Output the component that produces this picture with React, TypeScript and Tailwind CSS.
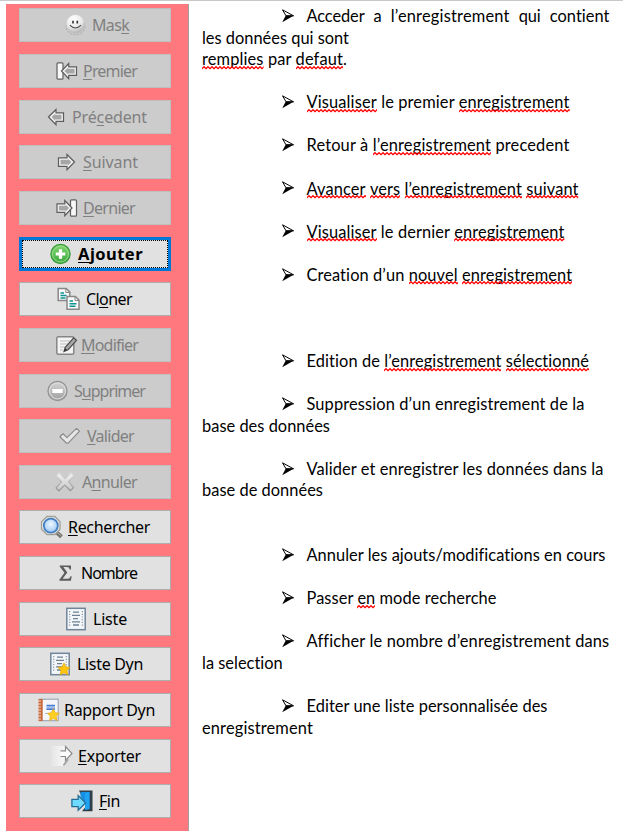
import { useLayoutEffect, useRef, useState, type ReactNode } from "react";

/* Spreads or tightens the letters of a run so that it fills the given width. */
function Fit({ w, className = "", children }: { w: number; className?: string; children: ReactNode }) {
  const ref = useRef<HTMLSpanElement>(null);
  const [spacing, setSpacing] = useState(0);
  useLayoutEffect(() => {
    const el = ref.current;
    if (!el) return;
    el.style.letterSpacing = "0px";
    const natural = el.getBoundingClientRect().width;
    const next = (w - natural) / (el.textContent || " ").length;
    el.style.letterSpacing = `${next}px`;
    setSpacing(next);
  }, [w]);
  return (
    <span ref={ref} className={`inline-block whitespace-pre ${className}`} style={{ letterSpacing: `${spacing}px` }}>
      {children}
    </span>
  );
}

const PrevArrow = () => (
  <g>
    <path d="M1.5 12 9 4.5v3.3h7.5v8.6H9v3.3z" fill="#f4f4f4" stroke="#5c5c5c" strokeWidth="1.2" />
    <path d="M4.5 12 8 8.8v1h6.5v4.7H8v1z" fill="#a6a6a6" />
  </g>
);
const NextArrow = () => (
  <g>
    <path d="M17.5 12 10 4.5v3.3H1.5v8.6H10v3.3z" fill="#f4f4f4" stroke="#5c5c5c" strokeWidth="1.2" />
    <path d="M14.5 12 11 8.8v1H3.5v4.7H11v1z" fill="#a6a6a6" />
  </g>
);
const Sheet = () => (
  <g>
    <rect x="0.8" y="1.3" width="18.4" height="21.4" fill="#f3f6f8" stroke="#71859a" strokeWidth="1.5" />
    <path d="M3.7 4v16M16.3 4v16" stroke="#8b9bab" strokeWidth="1.2" strokeDasharray="1.2 1.5" />
    <path d="M7 5.2h6M6 8.4h8M7 11.6h5M6 14.8h8M7 18h6" stroke="#6f8192" strokeWidth="1.3" />
  </g>
);
const STAR = "M0-6 1.9-2.1 6-1.6 3 1.5 3.8 5.8 0 3.8-3.8 5.8-3 1.5-6-1.6-1.9-2.1z";

const icons: Record<string, ReactNode> = {
  mask: (
    <g>
      <ellipse cx="10.5" cy="13.5" rx="9.5" ry="8.5" fill="#c3c3c3" stroke="#a9a9a9" strokeWidth=".8" strokeDasharray="2 1.5" />
      <circle cx="10.4" cy="10.8" r="9" fill="url(#ball)" />
      <path d="M8 7.7v2.8M12.3 7.7v2.8" stroke="#303030" strokeWidth="1.6" />
      <path d="M4.8 12.2q5.6 5.6 11.2 0" fill="none" stroke="#4c4c4c" strokeWidth="1.2" />
    </g>
  ),
  first: (
    <g>
      <rect x="1" y="3.8" width="6" height="16.4" rx="1" fill="#f8f8f8" stroke="#606060" strokeWidth="1.2" />
      <path d="M5.5 12 12.7 4.5v3.3h7.8v8.6h-7.8v3.3z" fill="#f4f4f4" stroke="#5c5c5c" strokeWidth="1.2" />
      <path d="M8.3 12 12 8.8v1h6.6v4.7H12v1z" fill="#a6a6a6" />
    </g>
  ),
  prev: <PrevArrow />,
  next: <NextArrow />,
  last: (
    <g>
      <rect x="14.5" y="3.8" width="6" height="16.4" rx="1" fill="#f8f8f8" stroke="#606060" strokeWidth="1.2" />
      <path d="M16 12 8.8 4.5v3.3H1v8.6h7.8v3.3z" fill="#f4f4f4" stroke="#5c5c5c" strokeWidth="1.2" />
      <path d="M13.2 12 9.5 8.8v1H2.9v4.7h6.6v1z" fill="#a6a6a6" />
    </g>
  ),
  add: (
    <g>
      <circle cx="10.5" cy="12" r="9.6" fill="url(#green)" stroke="#359b37" strokeWidth="1.2" />
      <circle cx="10.5" cy="12" r="8" fill="none" stroke="#a1dc93" strokeWidth=".9" />
      <path d="M10.5 7.2v9.6M5.7 12h9.6" stroke="#fff" strokeWidth="3.2" />
    </g>
  ),
  clone: (
    <g>
      <path d="M1.2 1.5h8l3.6 3.6v8.4H1.2z" fill="#fafafa" stroke="#888" strokeWidth="1.5" />
      <path d="M8.8 1.5v4h4" fill="none" stroke="#888" />
      <path d="M3.5 6h3.5M3.5 8.5h6M3.5 11h5" stroke="#0e9292" strokeWidth="1.5" />
      <path d="M10 9.5h8.4l3.6 3.6v9.2H10z" fill="#fafafa" stroke="#888" strokeWidth="1.5" />
      <path d="M18 9.5v4h4" fill="none" stroke="#888" />
      <path d="M12.5 14h3.5M12.5 16.7h7M12.5 19.3h6" stroke="#0e9292" strokeWidth="1.5" />
    </g>
  ),
  edit: (
    <g>
      <rect x=".8" y="3.8" width="17" height="17.4" rx="1.5" fill="#f4f4f4" stroke="#858585" strokeWidth="1.5" />
      <path d="M4 8h10M4 11h8M4 14h5M4 17h3" stroke="#bdbdbd" strokeWidth="1.1" />
      <path d="m8 18.5 1.3-4.2 8.4-9.5 2.8 2.5-8.4 9.4z" fill="#a8a8a8" stroke="#4c4c4c" strokeWidth="1.2" />
      <path d="m8 18.5 1-3.2 2.4 1.8z" fill="#333" />
    </g>
  ),
  remove: (
    <g>
      <circle cx="10.5" cy="12" r="9.6" fill="url(#gray)" stroke="#929292" strokeWidth="1.1" />
      <circle cx="10.5" cy="12" r="7.9" fill="none" stroke="#dedede" strokeWidth="1" />
      <path d="M5.3 12h10.4" stroke="#fff" strokeWidth="4" />
    </g>
  ),
  check: <path d="M.9 12.8 4 9.8l4 3.8L17.5 4.4l3 2.8L9.2 19.2H7.6z" fill="#e7e7e7" stroke="#8c8c8c" strokeWidth="1.2" strokeLinejoin="round" />,
  cancel: (
    <path d="M1 5.5 4.3 2.8 10 8.5 16 3l3 2.8-5.5 5.8 5 6-3.2 3L9.8 15l-6 5.8-2.8-3 5.6-6z" fill="url(#fade)" stroke="url(#fadeStroke)" strokeWidth="1.1" strokeLinejoin="round" />
  ),
  search: (
    <g>
      <path d="m15.5 16.5 6 5.2" stroke="#74746c" strokeWidth="4" />
      <path d="m16.5 16.8 4.3 3.8" stroke="#b9b9ae" strokeWidth="1" />
      <path d="M7 1.5h8L20 6.7v7.6l-5 5.2H7L1.5 14.3V6.7z" fill="#e9e9e4" stroke="#a1a19a" strokeWidth="1.3" />
      <circle cx="10.8" cy="10.6" r="7" fill="url(#lens)" stroke="#4681c5" strokeWidth="1.8" />
    </g>
  ),
  sum: (
    <path d="M.7 4.4H12v4h-1.4c-.2-1.6-1-2.3-2.8-2.3H4.3l4 5.3-4.7 6.3h5c1.6 0 2.4-.8 2.9-2.5h1.2l-.8 4.5H.4v-1l5-6.9L.7 5.4z" fill="#5c5c5c" />
  ),
  list: <Sheet />,
  listDyn: (
    <g>
      <Sheet />
      <g transform="translate(14 17)"><path d={STAR} fill="#ffc40e" stroke="#e5a700" strokeWidth=".7" /></g>
    </g>
  ),
  report: (
    <g>
      <rect x="1.7" y="1.2" width="18.5" height="21.5" fill="#f4f6fa" stroke="#9aa3b4" strokeWidth="1.1" />
      <rect x=".5" y="1" width="4.2" height="22" fill="#c8673a" />
      <path d="M0 3h3M0 6h3M0 9h3M0 12h3M0 15h3M0 18h3M0 21h3" stroke="#f1dacb" strokeWidth="1" />
      <path d="M8.5 7.7h8.5M8.5 11.2h8.5" stroke="#467bd2" strokeWidth="1.7" />
      <path d="M8.5 9.4h8.5" stroke="#9ebaeb" strokeWidth="1.6" />
      <path d="M7 15.5h4" stroke="#a6b7d3" />
      <g transform="translate(15.3 16.8)"><path d={STAR} fill="#ffcf22" stroke="#e5a91c" strokeWidth=".7" /></g>
    </g>
  ),
  export: (
    <g>
      <path d="M.5 2h14v20H.5z" fill="url(#paper)" />
      <path d="M9.5 6.8h5V2.5l6.5 7-6.5 7v-4h-5" fill="#fbfbfb" stroke="#8b8b8b" strokeWidth="1.2" />
      <path d="m12.5 21.5 4.5-6.3" fill="none" stroke="#a5a5a5" strokeWidth="2" />
    </g>
  ),
  exit: (
    <g>
      <path d="M8 1.5h13.5v20.7H11l4-5z" fill="#2f3e49" />
      <path d="M9.5 3h9v17h-5l2-6-6-6z" fill="#168fe2" />
      <path d="m14 4 4.5-1v17l-4.5 1z" fill="#1fa2f2" />
      <path d="M.9 10.3h6.3V6.6l7.3 7.3-7.3 7.3v-3.6H.9z" fill="#6fdcff" stroke="#226d98" strokeWidth="1.3" />
    </g>
  ),
};

type Item = {
  icon: string;
  pad: string;
  gap: string;
  w: number;
  parts: [string, string, string];
  off?: boolean;
  focus?: boolean;
};

/* pad: button edge to icon; gap: icon box (24px) to label. */
const items: Item[] = [
  { icon: "mask", pad: "pl-[46px]", gap: "ml-[3px]", w: 37, parts: ["Mas", "k", ""], off: true },
  { icon: "first", pad: "pl-[37px]", gap: "ml-[3px]", w: 54, parts: ["", "P", "remier"], off: true },
  { icon: "prev", pad: "pl-[28px]", gap: "ml-[1px]", w: 75, parts: ["Pré", "c", "edent"], off: true },
  { icon: "next", pad: "pl-[38px]", gap: "ml-[2px]", w: 55, parts: ["", "S", "uivant"], off: true },
  { icon: "last", pad: "pl-[37px]", gap: "ml-[3px]", w: 52, parts: ["", "D", "ernier"], off: true },
  { icon: "add", pad: "pl-[31px]", gap: "ml-[4px]", w: 65, parts: ["", "A", "jouter"], focus: true },
  { icon: "clone", pad: "pl-[38px]", gap: "ml-[5px]", w: 46, parts: ["Cl", "o", "ner"] },
  { icon: "edit", pad: "pl-[37px]", gap: "ml-[1px]", w: 57, parts: ["", "M", "odifier"], off: true },
  { icon: "remove", pad: "pl-[28px]", gap: "ml-[3px]", w: 71, parts: ["S", "u", "pprimer"], off: true },
  { icon: "check", pad: "pl-[40px]", gap: "ml-[4px]", w: 47, parts: ["", "V", "alider"], off: true },
  { icon: "cancel", pad: "pl-[36px]", gap: "ml-[3px]", w: 55, parts: ["A", "n", "nuler"], off: true },
  { icon: "search", pad: "pl-[21px]", gap: "ml-[4px]", w: 82, parts: ["", "R", "echercher"] },
  { icon: "sum", pad: "pl-[40px]", gap: "-ml-[2px]", w: 56, parts: ["Nombre", "", ""] },
  { icon: "list", pad: "pl-[47px]", gap: "ml-[3px]", w: 34, parts: ["Liste", "", ""] },
  { icon: "listDyn", pad: "pl-[31px]", gap: "ml-[3px]", w: 66, parts: ["Liste Dyn", "", ""] },
  { icon: "report", pad: "pl-[19px]", gap: "ml-[2px]", w: 91, parts: ["Rapport Dyn", "", ""] },
  { icon: "export", pad: "pl-[32px]", gap: "ml-[3px]", w: 63, parts: ["", "E", "xporter"] },
  { icon: "exit", pad: "pl-[52px]", gap: "ml-[4px]", w: 21, parts: ["", "F", "in"] },
];

function ToolButton({ item }: { item: Item }) {
  const tone = item.focus
    ? "bg-[#e1e1e1] text-black font-bold outline-[3px] -outline-offset-[3px] outline-[#0078d7]"
    : item.off
      ? "bg-[#cccccc] text-[#808080] outline-1 -outline-offset-1 outline-[#bfbfbf]"
      : "bg-[#e1e1e1] text-black outline-[1.5px] -outline-offset-1 outline-[#adadad]";
  return (
    <button className={`relative flex h-[34px] w-[152px] shrink-0 items-center outline-solid ${tone} ${item.pad}`}>
      {item.focus && <span className="absolute inset-[3px] border border-dotted border-black" />}
      <svg width="24" height="24" viewBox="0 0 24 24" className="shrink-0">{icons[item.icon]}</svg>
      <Fit w={item.w} className={`${item.focus ? "text-[16.5px]" : "text-[16px]"} leading-[22px] ${item.gap}`}>
        {item.parts[0]}
        {item.parts[1] && <span className="underline decoration-1 underline-offset-[2px] [text-decoration-skip-ink:none]">{item.parts[1]}</span>}
        {item.parts[2]}
      </Fit>
    </button>
  );
}

/* A word flagged by the spelling checker. */
function Err({ children }: { children: ReactNode }) {
  return (
    <span className="relative inline-block">
      {children}
      <svg className="absolute top-[17.5px] left-0 h-[4px] w-full">
        <rect width="100%" height="4" fill="url(#wave)" />
      </svg>
    </span>
  );
}

const Bullet = () => (
  <svg width="12" height="14" viewBox="0 0 12 14" className="mr-[12.5px] ml-[80px] shrink-0">
    <path d="M.5.8 11.5 6.8 4 6.8z" fill="#fff" stroke="#000" strokeWidth="1" />
    <path d="M.2 13.2 3.8 6.5H12z" fill="#000" />
  </svg>
);

type Line = { w?: number; bullet?: boolean; body?: ReactNode };
const lines: Line[] = [
  {
    bullet: true,
    body: (
      <span className="flex w-[303px] justify-between">
        <Fit w={58}>Acceder</Fit><Fit w={8}>a</Fit><Fit w={119}>l’enregistrement</Fit><Fit w={22}>qui</Fit><Fit w={60}>contient</Fit>
      </span>
    ),
  },
  { w: 147, body: "les données qui sont" },
  { w: 145, body: <><Err>remplies</Err> par <Err>defaut</Err>.</> },
  {},
  { w: 263, bullet: true, body: <><Err>Visualiser</Err> le premier <Err>enregistrement</Err></> },
  {},
  { w: 263, bullet: true, body: <>Retour à <Err>l’enregistrement</Err> precedent</> },
  {},
  { w: 272, bullet: true, body: <><Err>Avancer</Err> <Err>vers</Err> <Err>l’enregistrement</Err> <Err>suivant</Err></> },
  {},
  { w: 258, bullet: true, body: <><Err>Visualiser</Err> le dernier <Err>enregistrement</Err></> },
  {},
  { w: 266, bullet: true, body: <>Creation d’un <Err>nouvel</Err> <Err>enregistrement</Err></> },
  {},
  {},
  {},
  { w: 283, bullet: true, body: <>Edition de <Err>l’enregistrement</Err> <Err>sélectionné</Err></> },
  {},
  { w: 278, bullet: true, body: "Suppression d’un enregistrement de la" },
  { w: 128, body: "base des données" },
  {},
  { w: 297, bullet: true, body: "Valider et enregistrer les données dans la" },
  { w: 121, body: "base de données" },
  {},
  {},
  { w: 299, bullet: true, body: "Annuler les ajouts/modifications en cours" },
  {},
  { w: 190, bullet: true, body: <>Passer <Err>en</Err> mode recherche</> },
  {},
  { w: 302, bullet: true, body: "Afficher le nombre d’enregistrement dans" },
  { w: 81, body: "la selection" },
  {},
  { w: 241, bullet: true, body: "Editer une liste personnalisée des" },
  { w: 111, body: "enregistrement" },
];

export default function App() {
  return (
    <div className="flex h-[837px] w-[623px] flex-col overflow-hidden border-t border-[#c8c8c8] bg-white">
      <svg width="0" height="0" className="absolute">
        <defs>
          <radialGradient id="ball" cx=".4" cy=".25" r=".8"><stop offset="0" stopColor="#fff" /><stop offset=".6" stopColor="#e9e9e9" /><stop offset="1" stopColor="#acacac" /></radialGradient>
          <linearGradient id="green" x2="0" y2="1"><stop stopColor="#84d774" /><stop offset="1" stopColor="#36a83b" /></linearGradient>
          <linearGradient id="gray" x2="0" y2="1"><stop stopColor="#d5d5d5" /><stop offset="1" stopColor="#9e9e9e" /></linearGradient>
          <linearGradient id="fade" x2="0" y2="1"><stop stopColor="#f2f2f2" /><stop offset="1" stopColor="#c7c7c7" /></linearGradient>
          <linearGradient id="fadeStroke" x2="0" y2="1"><stop stopColor="#dcdcdc" /><stop offset="1" stopColor="#8d8d8d" /></linearGradient>
          <radialGradient id="lens" cx=".5" cy=".4"><stop stopColor="#f0f8ff" /><stop offset="1" stopColor="#a7cff5" /></radialGradient>
          <linearGradient id="paper"><stop stopColor="#e6e6e6" /><stop offset="1" stopColor="#f7f7f7" /></linearGradient>
          <pattern id="wave" width="4" height="4" patternUnits="userSpaceOnUse"><path d="M-1 1.7 0 2.7 2 .7 4 2.7 5 1.7" fill="none" stroke="#ff0000" strokeWidth="1.3" /></pattern>
        </defs>
      </svg>
      <div className="flex pt-[3px]">
        <aside className="ml-[6px] flex h-[827px] w-[183px] flex-col gap-[11.65px] border-r border-[#a0a0a0] bg-[#ff787d] pt-[4.4px] pl-[13px] font-['Noto_Sans',sans-serif]">
          {items.map((item) => <ToolButton key={item.icon} item={item} />)}
        </aside>
        <main className="ml-[13px] flex w-[420px] flex-col pt-[1px] font-[Lato,sans-serif] text-[16.4px] leading-[21.57px] text-black">
          {lines.map((line, i) => (
            <div key={i} className="flex h-[21.57px] shrink-0 items-center">
              {line.bullet && <Bullet />}
              {line.w ? <Fit w={line.w}>{line.body}</Fit> : line.body}
            </div>
          ))}
        </main>
      </div>
    </div>
  );
}
